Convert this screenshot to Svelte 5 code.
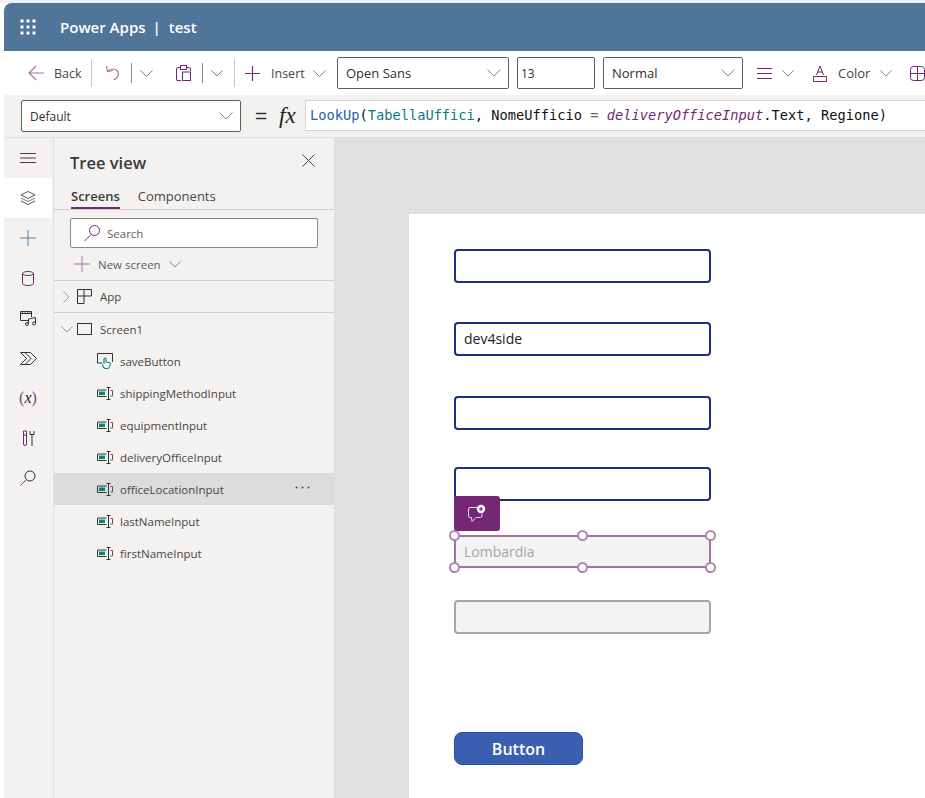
<script>
  const rows = [
    { name: 'shippingMethodInput' },
    { name: 'equipmentInput' },
    { name: 'deliveryOfficeInput' },
    { name: 'officeLocationInput', selected: true },
    { name: 'lastNameInput' },
    { name: 'firstNameInput' }
  ];
  const fields = [
    { top: 249, text: '', kind: 'active' },
    { top: 322, text: 'dev4side', kind: 'active' },
    { top: 396, text: '', kind: 'active' },
    { top: 467, text: '', kind: 'active' },
    { top: 600, text: '', kind: 'off' }
  ];
  const handles = [[454.5, 535.5], [582.5, 535.5], [710.5, 535.5], [454.5, 567.5], [582.5, 567.5], [710.5, 567.5]];
</script>

<div class="page">
  <div class="app">
    <header class="header">
      <svg class="waffle" width="16" height="16" viewBox="0 0 16 16" fill="#fff">
        {#each [0, 6, 12] as y}
          {#each [0, 6, 12] as x}
            <rect x={x + 0.5} y={y + 0.5} width="3" height="3" />
          {/each}
        {/each}
      </svg>
      <span class="brand">Power Apps</span><span class="bar">|</span><span class="brand">test</span>
    </header>

    <div class="toolbar">
      <svg class="back" width="16" height="16" viewBox="0 0 16 16" fill="none" stroke="#a9739f" stroke-width="1.2"><path d="M1 8h15M8 1 1 8l7 7" /></svg>
      <span class="tb-label back-label">Back</span>
      <i class="sep s1"></i>
      <svg class="undo" width="15" height="16" viewBox="0 0 15 16" fill="none" stroke="#a9739f" stroke-width="1.2"><path d="M1.500 1 2.500 6.500 8 5.500M2.500 6.500C4 4.500 6 4 8 4c3 0 5.500 2.200 5.500 5 0 2.500-2 4.500-5 6" /></svg>
      <i class="sep s2"></i>
      <svg class="c1" width="13" height="7" viewBox="0 0 13 7" fill="none" stroke="#6b7d8c"><path d="m.5.500 6 6 6-6" /></svg>
      <svg class="paste" width="15" height="16" viewBox="0 0 15 16" fill="none" stroke="#742774" stroke-width="1.100"><path d="M4 2.500H2.500a2 2 0 0 0-2 2V14a1.500 1.500 0 0 0 1.500 1.500h3M11 2.500h1.500a2 2 0 0 1 2 2V6M4.500 .5h6v4h-6zM6.500 7h8v8.500h-8z" /></svg>
      <i class="sep s3"></i>
      <svg class="c2" width="12" height="7" viewBox="0 0 12 7" fill="none" stroke="#6b7d8c"><path d="m.5.500 5.500 5.500L11.500.500" /></svg>
      <i class="sep s4"></i>
      <svg class="plus" width="15" height="15" viewBox="0 0 15 15" fill="none" stroke="#742774" stroke-width="1.200"><path d="M7.500 0v15M0 7.500h15" /></svg>
      <span class="tb-label insert">Insert</span>
      <svg class="c3" width="13" height="7" viewBox="0 0 13 7" fill="none" stroke="#6b8aa3"><path d="m.5.500 6 6 6-6" /></svg>
      <div class="select font"><span>Open Sans</span><svg width="14" height="8" viewBox="0 0 14 8" fill="none" stroke="#6b8aa3"><path d="m.5.500 6.500 6.500 6.500-6.500" /></svg></div>
      <div class="select size"><span>13</span></div>
      <div class="select weight"><span>Normal</span><svg width="14" height="8" viewBox="0 0 14 8" fill="none" stroke="#6b8aa3"><path d="m.5.500 6.500 6.500 6.500-6.500" /></svg></div>
      <svg class="align" width="15" height="11" viewBox="0 0 15 11" fill="none" stroke="#742774"><path d="M0 .5h15M0 5.500h15M0 10.500h15" /></svg>
      <svg class="c4" width="12" height="7" viewBox="0 0 12 7" fill="none" stroke="#6b8aa3"><path d="m.5.500 5.500 5.500L11.500.500" /></svg>
      <svg class="color" width="14" height="17" viewBox="0 0 14 17" fill="none" stroke="#742774"><path d="M3.500 10 7 1l3.500 9M4.500 7h5M.5 11.500h13v5H.5z" /></svg>
      <span class="tb-label colorl">Color</span>
      <svg class="c5" width="12" height="7" viewBox="0 0 12 7" fill="none" stroke="#6b8aa3"><path d="m.5.500 5.500 5.500L11.500.500" /></svg>
      <svg class="grid" width="15" height="15" viewBox="0 0 15 15" fill="none" stroke="#742774"><rect x=".5" y=".5" width="14" height="14" rx="3" /><path d="M7.500 0v15M0 7.500h15" /></svg>
    </div>

    <div class="formula">
      <div class="select prop"><span>Default</span><svg width="14" height="8" viewBox="0 0 14 8" fill="none" stroke="#7d8f9e"><path d="m.5.500 6.500 6.500 6.500-6.500" /></svg></div>
      <span class="equals">=</span>
      <span class="fx">fx</span>
      <div class="expr"><div class="code"><span class="blue">LookUp</span>(<span class="teal">TabellaUffici</span>, NomeUfficio <span class="gray">=</span> <em>deliveryOfficeInput</em>.Text, Regione)</div></div>
    </div>

    <div class="main">
      <nav class="rail">
        <div class="rail-item menu"><svg width="16" height="10" viewBox="0 0 16 10" fill="none" stroke="#5c2e4f"><path d="M0 .5h16M0 5h16M0 9.500h16" /></svg></div>
        <div class="rail-item on"><svg width="16" height="16" viewBox="0 0 16 16" fill="none" stroke="#3d5a70"><path d="M8 1.500 15 5l-7 3.500L1 5z" /><path d="M1 8l7 3.500L15 8" stroke="#8a6d3b" /><path d="M1 11l7 3.500 7-3.500" /></svg></div>
        <div class="rail-item"><svg width="16" height="16" viewBox="0 0 16 16" fill="none"><path d="M0 8h16" stroke="#7a7268" stroke-width="1.200" /><path d="M8 0v16" stroke="#4f95d6" stroke-width="1.200" /></svg></div>
        <div class="rail-item"><svg width="12" height="15" viewBox="0 0 12 15" fill="none" stroke="#742774"><ellipse cx="6" cy="2.500" rx="5.500" ry="2" stroke="#444" /><path d="M.5 2.500v10c0 1.100 2.500 2 5.500 2s5.500-.9 5.500-2v-10" /></svg></div>
        <div class="rail-item"><svg width="17" height="15" viewBox="0 0 17 15" fill="none" stroke="#333"><path d="M9 9.500H.5v-9h11V6M.5 2.500h11" /><path d="M2.500 .5v2M5 .5v2M7.500 .5v2M10 .5v2" stroke-width=".7" /><path d="M8.500 13V8l7-1.500V12" stroke="#333" /><circle cx="7" cy="13" r="1.500" stroke="#333" /><circle cx="14" cy="12.500" r="1.500" stroke="#333" /></svg></div>
        <div class="rail-item"><svg width="17" height="13" viewBox="0 0 17 13" fill="none" stroke="#333"><path d="M.5.500h10l6 6-6 6H.5l6-6zM5 .5l6 6-6 6" /></svg></div>
        <div class="rail-item vars"><span class="paren">(</span><span class="x">x</span><span class="paren">)</span></div>
        <div class="rail-item"><svg width="13" height="17" viewBox="0 0 13 17" fill="none"><path d="M1.500 1v13a1.500 1.500 0 0 0 3 0V1zM1.500 5h3" stroke="#742774" /><path d="M8 1v3.500h4V1M10 4.500V16" stroke="#333" /></svg></div>
        <div class="rail-item"><svg width="16" height="16" viewBox="0 0 16 16" fill="none" stroke="#333"><circle cx="10" cy="6" r="5" /><path d="M6.500 9.500 .5 15.500" stroke="#6b4a6b" /></svg></div>
      </nav>

      <aside class="tree">
        <div class="tree-head">
          <span class="title">Tree view</span>
          <svg width="13" height="13" viewBox="0 0 13 13" fill="none" stroke="#444"><path d="m.5.500 12 12M12.500.500l-12 12" /></svg>
        </div>
        <div class="tabs">
          <span class="tab on">Screens</span>
          <span class="tab">Components</span>
        </div>
        <div class="search">
          <svg width="18" height="18" viewBox="0 0 18 18" fill="none"><circle cx="11.500" cy="6.500" r="5" stroke="#742774" /><path d="M8 10.500 1.500 17" stroke="#742774" /></svg>
          <span>Search</span>
        </div>
        <div class="new">
          <svg width="16" height="16" viewBox="0 0 16 16" fill="none" stroke="#bb94b8" stroke-width="1.300"><path d="M8 0v16M0 8h16" /></svg>
          <span>New screen</span>
          <svg width="12" height="7" viewBox="0 0 12 7" fill="none" stroke="#888"><path d="m.5.500 5.500 5.500L11.500.500" /></svg>
        </div>
        <div class="row app-row">
          <svg class="arrow" width="14" height="12" viewBox="0 0 14 12" fill="none" stroke="#999"><path d="m2.500.5 5.500 5.500-5.500 5.500" /></svg>
          <svg width="15" height="15" viewBox="0 0 15 15" fill="none" stroke="#333"><path d="M.5.500h6.500v14H.5zM7 .5h7.500v6.500H.5" /></svg>
          <span>App</span>
        </div>
        <div class="row screen-row">
          <svg class="arrow" width="14" height="7" viewBox="0 0 14 7" fill="none" stroke="#999"><path d="m.5.500 5.500 5.500L11.500.500" /></svg>
          <svg width="15" height="12" viewBox="0 0 15 12" fill="none" stroke="#333"><rect x=".5" y=".5" width="14" height="11" /></svg>
          <span>Screen1</span>
        </div>
        <div class="row child">
          <svg width="16" height="16" viewBox="0 0 16 16" fill="none"><path d="M5 10H.5V.5h15V9" stroke="#333" /><path d="M7 11V6c0-1.300 2-1.300 2 0v3l3 .5c1 .2 1.500 1 1.300 2-.3 1.500-1 3.500-2.300 4H8c-1-.5-2-2-3-4" stroke="#038387" stroke-width="1.100" /></svg>
          <span>saveButton</span>
        </div>
        {#each rows as r}
          <div class="row child" class:selected={r.selected}>
            <svg width="16" height="13" viewBox="0 0 16 13" fill="none"><path d="M9.500 3H.5v6.500h9" stroke="#333" /><rect x="2" y="4.500" width="6" height="3.500" fill="#038387" /><path d="M9.500 .5h4M9.500 12.500h4M11.500 .5v12" stroke="#333" /><path d="M13.500 3.500h2v5.500h-2" stroke="#333" stroke-width=".8" /></svg>
            <span>{r.name}</span>
            {#if r.selected}
              <svg class="dots" width="15" height="3" viewBox="0 0 15 3" fill="#244a6e"><circle cx="1.500" cy="1.500" r="1" /><circle cx="7.500" cy="1.500" r="1" /><circle cx="13.500" cy="1.500" r="1" /></svg>
            {/if}
          </div>
        {/each}
      </aside>

      <section class="stage">
        <div class="screen">
          {#each fields as f}
            <div class="field {f.kind}" style="top:{f.top - 214}px">{f.text}</div>
          {/each}
          <div class="selected-field">Lombardia</div>
          {#each handles as h}
            <i class="handle" style="left:{h[0] - 409 - 5.5}px;top:{h[1] - 214 - 5.5}px"></i>
          {/each}
          <div class="comment">
            <svg width="20" height="19" viewBox="0 0 20 19" fill="none" stroke="#e8d5e8"><path d="M10 3.500H3A1.500 1.500 0 0 0 1.500 5v7A1.500 1.500 0 0 0 3 13.500h1.500L5 17.500l4-4h4.500A1.500 1.500 0 0 0 15 12V9.500" /><circle cx="14" cy="5" r="4.200" fill="#fff" stroke="none" /><path d="M14 3v4M12 5h4" stroke="#742774" stroke-width="1.200" /></svg>
          </div>
          <div class="btn">Button</div>
        </div>
      </section>
    </div>
  </div>
</div>

<style>
  :global(body) { margin: 0; background: #fff; }
  * { box-sizing: border-box; }
  .page {
    width: 925px; height: 798px; overflow: hidden; padding: 3px 0 0 4px;
    background: linear-gradient(#f0f0f0 3px, #fff 3px);
    font-family: "Open Sans", "Noto Sans", sans-serif; color: #323130;
  }
  .app { width: 921px; height: 795px; display: flex; flex-direction: column; background: #f3f2f1; border-top-left-radius: 8px; overflow: hidden; }
  .header { height: 48px; flex: none; background: #4f7598; display: flex; align-items: center; color: #fff; padding-left: 16px; font-weight: 600; font-size: 15px; }
  .waffle { margin-right: 24px; }
  .bar { margin: 0 8px 0 7px; }
  .toolbar { height: 44px; flex: none; background: #fff; display: flex; align-items: center; font-size: 12.500px; }
  .toolbar > * { flex: none; }
  .back { margin-left: 24px; }
  .tb-label { color: #484644; }
  .back-label { margin-left: 10px; width: 29px; }
  .sep { width: 1px; height: 28px; background: #c8c6c4; }
  .sep.s1 { margin-left: 8px; }
  .undo { margin-left: 13px; }
  .sep.s2 { height: 20px; background: #8a8886; margin-left: 11px; }
  .c1 { margin-left: 8px; }
  .paste { margin-left: 23px; }
  .sep.s3 { height: 20px; background: #8a8886; margin-left: 11px; }
  .c2 { margin-left: 8px; }
  .sep.s4 { margin-left: 11px; }
  .plus { margin-left: 10px; }
  .insert { margin-left: 11px; width: 35px; }
  .c3 { margin-left: 7px; }
  .select { border: 1px solid #605e5c; border-radius: 2px; background: #fff; display: flex; align-items: center; justify-content: space-between; padding: 0 7px 0 8px; height: 32px; color: #323130; font-size: 13px; }
  .font { width: 172px; margin-left: 11px; }
  .size { width: 78px; margin-left: 8px; padding: 0 3px; font-size: 12px; }
  .weight { width: 140px; margin-left: 8px; }
  .align { margin-left: 14px; }
  .c4 { margin-left: 10px; }
  .color { margin-left: 19px; }
  .colorl { margin-left: 11px; width: 34px; font-size: 13px; }
  .c5 { margin-left: 8px; }
  .grid { margin-left: 18px; }
  .formula { height: 43px; flex: none; background: #f3f2f1; display: flex; align-items: center; padding-bottom: 1px; border-bottom: 1px solid #e1dfdd; }
  .prop { width: 220px; height: 32px; margin-left: 17px; font-size: 12px; padding-top: 1px; }
  .equals { margin-left: 14px; width: 14px; font-size: 21px; line-height: 1; color: #323130; font-family: "Liberation Sans", sans-serif; }
  .fx { margin-left: 10px; width: 18px; font-family: "Liberation Serif", serif; font-style: italic; font-size: 23px; line-height: 1; color: #222; }
  .expr { margin-left: 8px; flex: 1; height: 31px; background: #fff; border: 1px solid #d6d4d2; border-right: 0; display: flex; align-items: center; padding: 0 0 1px 4px; font-family: "DejaVu Sans Mono", monospace; font-size: 13.700px; color: #111; }
  .code { white-space: pre; }
  .blue { color: #1f5fa8; }
  .teal { color: #0b7a7d; }
  .gray { color: #666; }
  em { color: #742774; font-style: italic; }
  .main { flex: 1; display: flex; min-height: 0; }
  .rail { width: 50px; flex: none; border-right: 1px solid #e1dfdd; background: #f3f2f1; display: flex; flex-direction: column; }
  .rail-item { width: 48px; height: 40px; display: flex; align-items: center; justify-content: center; flex: none; }
  .rail-item.on { background: #fff; border-radius: 2px; }
  .vars { font-family: "Liberation Serif", serif; font-style: italic; font-size: 16px; color: #333; }
  .paren { color: #6a4a8a; font-style: normal; }
  .x { color: #222; }
  .tree { width: 280px; flex: none; background: #f3f2f1; display: flex; flex-direction: column; }
  .tree-head { height: 47px; display: flex; align-items: center; justify-content: space-between; padding: 4px 19px 2px 16px; flex: none; }
  .title { font-size: 16.500px; font-weight: 600; color: #3b3a39; }
  .tree-head svg { margin-top: -4px; }
  .tabs { height: 25px; display: flex; gap: 18px; padding-left: 17px; border-bottom: 1px solid #d2d0ce; font-size: 13px; color: #484644; flex: none; }
  .tab { line-height: 22px; height: 24px; }
  .tab.on { border-bottom: 2px solid #742774; font-weight: 600; color: #3b3a39; }
  .search { margin: 8px 16px 0; height: 30px; background: #fff; border: 1px solid #8a8886; border-radius: 2px; display: flex; align-items: center; gap: 6px; padding-left: 12px; font-size: 11.500px; color: #605e5c; flex: none; }
  .new { height: 33px; display: flex; align-items: center; padding-left: 20px; font-size: 11.500px; color: #605e5c; border-bottom: 1px solid #d2d0ce; flex: none; gap: 8px; }
  .row { height: 32px; display: flex; align-items: center; font-size: 11.500px; color: #484644; position: relative; flex: none; }
  .app-row { padding-left: 23px; border-bottom: 1px solid #d2d0ce; }
  .screen-row { padding-left: 23px; }
  .arrow { margin-left: -16px; margin-right: 2px; }
  .row span { margin-left: 8px; }
  .child { padding-left: 43px; }
  .child span { margin-left: 7px; }
  .child.selected { background: #dcdcdc; }
  .dots { position: absolute; left: 241px; top: 13px; }
  .stage { flex: 1; background: #e0e0e0; padding: 76px 0 0 75px; overflow: hidden; }
  .screen { position: relative; width: 600px; height: 600px; background: #fff; }
  .field { position: absolute; left: 45px; width: 257px; height: 34px; border-radius: 4px; font-size: 14px; padding-left: 8px; line-height: 30px; color: #222; background: #fff; }
  .field.active { border: 2px solid #1d2f7a; }
  .field.off { border: 2px solid #a6a6a6; background: #f3f3f3; }
  .selected-field { position: absolute; left: 45px; top: 321px; width: 257px; height: 33px; background: #f3f3f3; border: 2px solid #a070a0; font-size: 14px; padding-left: 8px; line-height: 29px; color: #a6a6a6; }
  .handle { position: absolute; width: 11px; height: 11px; border-radius: 50%; background: #fff; border: 2px solid #b083b0; }
  .comment { position: absolute; left: 45px; top: 282px; width: 46px; height: 35px; background: #742774; border-radius: 3px; display: flex; align-items: center; justify-content: center; }
  .btn { position: absolute; left: 45px; top: 518px; width: 129px; height: 33px; background: #3a5fb0; border: 1px solid #2f4f99; border-radius: 8px; display: flex; align-items: center; justify-content: center; color: #fff; font-weight: 600; font-size: 16px; }
</style>
